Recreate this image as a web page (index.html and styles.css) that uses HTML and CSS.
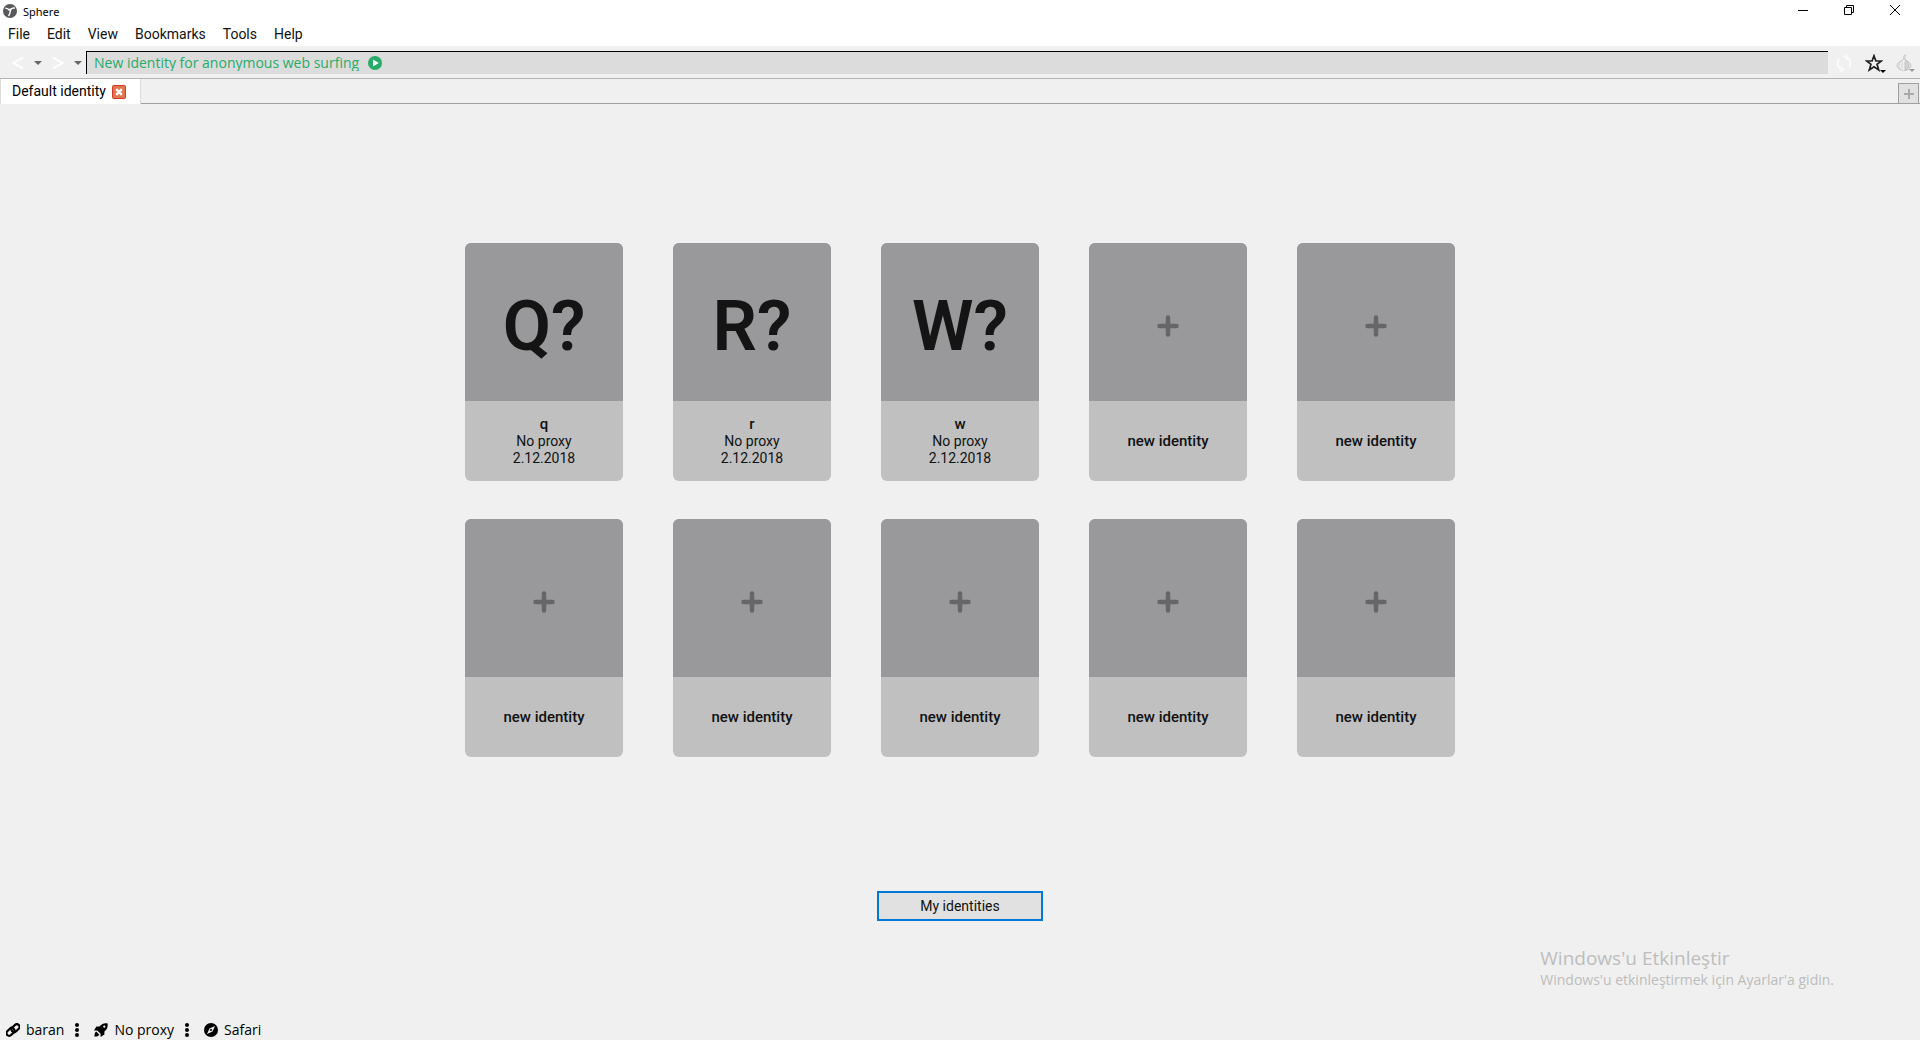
FILE: index.html
```html
<!DOCTYPE html>
<html lang="en">
<head>
    <meta charset="UTF-8">
    <meta name="viewport" content="width=device-width, initial-scale=1.0">
    <title>Sphere</title>
    <link rel="stylesheet" href="styles.css">
</head>
<body>
    <!-- Shared icons -->
    <svg class="sprite" aria-hidden="true">
        <symbol id="caret" viewBox="0 0 8 4"><path d="M0 0h8L4 4z"/></symbol>
        <symbol id="plus" viewBox="0 0 22 22"><path d="M11 2.5v17M2.5 11h17" stroke="currentColor" stroke-width="4.500" stroke-linecap="round"/></symbol>
        <symbol id="dots" viewBox="0 0 6 14"><circle cx="3" cy="2" r="2"/><circle cx="3" cy="7" r="2"/><circle cx="3" cy="12" r="2"/></symbol>
    </svg>

    <header class="title-bar">
        <svg class="app-icon" viewBox="0 0 14 14">
            <circle cx="7" cy="7" r="7" fill="#58585a"/>
            <path d="M2.300 4.200Q5 4.300 6.300 6.300M12 4.200Q9.500 3.500 7.300 5.600M7.300 6.800Q7.300 9.600 5.500 12" fill="none" stroke="#fff" stroke-width="1.300"/>
            <path d="M5.300 4.800L8.800 4.600 7.700 8.300z" fill="#fff"/>
        </svg>
        <span class="app-name">Sphere</span>
        <div class="window-controls">
            <button aria-label="Minimize"><svg viewBox="0 0 10 10"><path d="M0 5.5h10"/></svg></button>
            <button aria-label="Restore"><svg viewBox="0 0 10 10"><path d="M.5 2.5h7v7h-7zM2.5 2.5v-2h7v7h-2"/></svg></button>
            <button aria-label="Close"><svg viewBox="0 0 10 10"><path d="M0 0l10 10M10 0L0 10"/></svg></button>
        </div>
    </header>

    <nav class="menu-bar">
        <button>File</button>
        <button>Edit</button>
        <button>View</button>
        <button>Bookmarks</button>
        <button>Tools</button>
        <button>Help</button>
    </nav>

    <div class="toolbar">
        <div class="history">
            <button aria-label="Back"><svg class="chevron" viewBox="0 0 12 14"><path d="M11 1.500L1.500 7l9.500 5.500"/></svg></button>
            <button aria-label="Back history"><svg class="caret"><use href="#caret"/></svg></button>
            <button aria-label="Forward"><svg class="chevron" viewBox="0 0 12 14"><path d="M1 1.500L10.500 7 1 12.500"/></svg></button>
            <button aria-label="Forward history"><svg class="caret"><use href="#caret"/></svg></button>
        </div>
        <div class="address">
            <input type="text" aria-label="Address" value="New identity for anonymous web surfing">
            <button aria-label="Start">
                <svg class="play" viewBox="0 0 14 14"><circle cx="7" cy="7" r="7" fill="#27ab68"/><path d="M5 3.500L10.800 7 5 10.500z" fill="#fff"/></svg>
            </button>
        </div>
        <div class="tools">
            <button aria-label="Reload">
                <svg class="reload" viewBox="0 0 16 18"><path d="M6.500 15.300A6.500 6.500 0 0 1 3.200 4.800M9.500 2.700A6.500 6.500 0 0 1 12.800 13.200"/><path d="M4.500 12.500l3 2.900L4.300 18M11.500 5.500l-3-2.900L11.700 0" stroke-width="1.500"/></svg>
            </button>
            <button aria-label="Bookmarks">
                <svg class="star" viewBox="0 0 16 16"><path d="M8 1.500l1.700 4.700h4.900l-3.900 3 1.500 5L8 11.300l-4.200 2.900 1.500-5-3.900-3h4.900z"/></svg>
                <svg class="caret corner"><use href="#caret"/></svg>
            </button>
            <button aria-label="Tor" class="tor">
                <svg class="onion" viewBox="0 0 16 17"><path d="M9.500.5L7.500 3l.3 2.500C3.500 7.500 1 8.800 1 11.500 1 14.500 4 16.500 8 16.500s7-2 7-5c0-2.700-2.500-4-6-6L8.800 3.300z" fill="#ddd" stroke="#ccc"/><path d="M8 6c-3 2.500-3.500 4.500-3.500 6S6 15.500 8 16M8.500 6C7 9 7 12.500 8 16" fill="none" stroke="#f5f5f5"/><path d="M9 6c3 2 3.500 4 3.500 6s-1.500 3.500-3 4.200M9 8c1.200 2 1.200 5 0 8" fill="none" stroke="#bbb"/></svg>
                <svg class="caret corner"><use href="#caret"/></svg>
            </button>
        </div>
    </div>

    <div class="tab-bar">
        <div class="tab">
            <span>Default identity</span>
            <button aria-label="Close tab">
                <svg class="tab-close" viewBox="0 0 14 14"><rect x=".5" y=".5" width="13" height="13" rx="1" fill="#e0784f" stroke="#d6382c"/><path d="M4.200 4.200l5.600 5.600M9.800 4.200L4.200 9.800" stroke="#fff" stroke-width="2.400"/></svg>
            </button>
        </div>
        <button class="add-tab" aria-label="New tab"><svg viewBox="0 0 10 10"><path d="M5 0v10M0 5h10" stroke="#aaa" stroke-width="2"/></svg></button>
    </div>

    <main class="content">
        <div class="identities">
            <button class="card">
                <span class="avatar">Q?</span>
                <span class="info"><strong>q</strong><span>No proxy</span><span>2.12.2018</span></span>
            </button>
            <button class="card">
                <span class="avatar">R?</span>
                <span class="info"><strong>r</strong><span>No proxy</span><span>2.12.2018</span></span>
            </button>
            <button class="card">
                <span class="avatar">W?</span>
                <span class="info"><strong>w</strong><span>No proxy</span><span>2.12.2018</span></span>
            </button>
            <button class="card">
                <span class="avatar"><svg class="plus"><use href="#plus"/></svg></span>
                <span class="info"><strong>new identity</strong></span>
            </button>
            <button class="card">
                <span class="avatar"><svg class="plus"><use href="#plus"/></svg></span>
                <span class="info"><strong>new identity</strong></span>
            </button>
            <button class="card">
                <span class="avatar"><svg class="plus"><use href="#plus"/></svg></span>
                <span class="info"><strong>new identity</strong></span>
            </button>
            <button class="card">
                <span class="avatar"><svg class="plus"><use href="#plus"/></svg></span>
                <span class="info"><strong>new identity</strong></span>
            </button>
            <button class="card">
                <span class="avatar"><svg class="plus"><use href="#plus"/></svg></span>
                <span class="info"><strong>new identity</strong></span>
            </button>
            <button class="card">
                <span class="avatar"><svg class="plus"><use href="#plus"/></svg></span>
                <span class="info"><strong>new identity</strong></span>
            </button>
            <button class="card">
                <span class="avatar"><svg class="plus"><use href="#plus"/></svg></span>
                <span class="info"><strong>new identity</strong></span>
            </button>
        </div>
        <button class="my-identities">My identities</button>
    </main>

    <footer class="status-bar">
        <button>
            <svg class="status-icon" viewBox="0 0 14 14"><g fill="none" stroke="#000" stroke-width="2.200" transform="rotate(-45 7 7)"><rect x="-.6" y="3.800" width="9" height="5.400" rx="2.700"/><rect x="5.600" y="4.800" width="9" height="5.400" rx="2.700"/></g></svg>
            <span>baran</span>
        </button>
        <button class="more" aria-label="Identity options"><svg class="dots"><use href="#dots"/></svg></button>
        <button>
            <svg class="status-icon" viewBox="0 0 14 14"><path d="M13.600.4C9.500-.1 7.300 1.200 5.500 3.600H2.400L0 7.400h3.300L6.600 10.700V14l3.800-2.400V8.500C12.800 6.700 14.100 4.500 13.600.4zM2.300 8.600C.9 9.300.5 11 .4 13.600c2.600-.1 4.300-.5 5-1.900z"/><circle cx="10.300" cy="3.700" r="1.100" fill="#f0f0f0"/></svg>
            <span>No proxy</span>
        </button>
        <button class="more" aria-label="Proxy options"><svg class="dots"><use href="#dots"/></svg></button>
        <button>
            <svg class="status-icon" viewBox="0 0 14 14"><circle cx="7" cy="7" r="7"/><path d="M11 3L8.500 8.500 3 11l2.500-5.500z" fill="#f0f0f0"/><circle cx="7" cy="7" r="1.100"/></svg>
            <span>Safari</span>
        </button>
    </footer>

    <aside class="watermark" lang="tr">
        <p class="watermark-title">Windows'u Etkinleştir</p>
        <p>Windows'u etkinleştirmek için Ayarlar'a gidin.</p>
    </aside>
</body>
</html>
```
FILE: styles.css
```css
* {
    margin: 0;
    padding: 0;
    box-sizing: border-box;
}

body {
    display: flex;
    flex-direction: column;
    min-height: 100vh;
    font-family: Roboto, "Noto Sans", sans-serif;
    font-size: 14px;
    line-height: 17px;
    color: #111;
    background: #f0f0f0;
}

button,
input {
    font: inherit;
    color: inherit;
    background: none;
    border: none;
}

svg {
    display: block;
}

.sprite {
    position: absolute;
    width: 0;
    height: 0;
}

/* Title bar */
.title-bar {
    display: flex;
    align-items: center;
    height: 22px;
    padding: 0 2px 0 3px;
    background: #fff;
}

.app-icon {
    width: 14px;
    height: 14px;
}

.app-name {
    margin-left: 6px;
    font-family: "Noto Sans", sans-serif;
    font-size: 11px;
    color: #000;
}

.window-controls {
    display: flex;
    margin-left: auto;
}

.window-controls button {
    display: flex;
    justify-content: center;
    width: 46px;
    padding: 4px 0 6px;
}

.window-controls svg {
    width: 10px;
    height: 10px;
    fill: none;
    stroke: #000;
}

/* Menu */
.menu-bar {
    display: flex;
    align-items: center;
    gap: 17px;
    height: 25px;
    padding: 1px 8px 0;
    background: #fff;
    border-bottom: 1px solid #f2f2f2;
}

/* Toolbar */
.toolbar {
    display: flex;
    align-items: center;
    height: 32px;
    border-bottom: 1px solid #b4b4b4;
}

.history {
    display: flex;
    align-items: center;
    gap: 10px;
    padding: 0 4px 0 12px;
}

.chevron {
    width: 12px;
    height: 14px;
    fill: none;
    stroke: #fff;
    stroke-width: 2;
}

.caret {
    width: 8px;
    height: 4px;
    fill: #666;
}

.address {
    flex: 1;
    display: flex;
    align-items: center;
    height: 23px;
    padding-left: 7px;
    background: #dcdcdc;
    border-top: 1px solid #000;
    border-left: 1px solid #000;
}

.address input {
    width: 274px;
    padding-bottom: 2px;
    font-family: "Open Sans", sans-serif;
    color: #27ab68;
    outline: none;
}

.play {
    width: 14px;
    height: 14px;
}

.tools {
    display: flex;
    align-items: center;
    gap: 13px;
    padding: 0 8px;
}

.tools button {
    position: relative;
}

.reload {
    width: 16px;
    height: 18px;
    fill: none;
    stroke: #fafafa;
    stroke-width: 2;
}

.star {
    width: 18px;
    height: 18px;
    fill: none;
    stroke: #222;
    stroke-width: 1.5;
}

.onion {
    width: 16px;
    height: 17px;
}

.corner {
    position: absolute;
    right: -3px;
    bottom: -1px;
    width: 6px;
    height: 3px;
    fill: #000;
}

.tor .corner {
    fill: #999;
}

/* Tabs */
.tab-bar {
    display: flex;
    justify-content: space-between;
    align-items: flex-end;
    height: 25px;
    background: linear-gradient(#a0a0a0, #a0a0a0) bottom / 100% 1px no-repeat;
}

.tab {
    display: flex;
    align-items: center;
    gap: 6px;
    height: 25px;
    padding: 0 14px 0 11px;
    color: #000;
    background: #fff;
    border: 1px solid #dcdcdc;
    border-width: 0 1px;
}

.tab-close {
    width: 14px;
    height: 14px;
}

.add-tab {
    display: grid;
    place-items: center;
    width: 21px;
    height: 21px;
    margin-right: 1px;
    background: #e1e1e1;
    border: 1px solid #a0a0a0;
}

.add-tab svg {
    width: 10px;
    height: 10px;
}

/* Identities */
.content {
    flex: 1;
    display: flex;
    flex-direction: column;
    align-items: center;
    gap: 134px;
    padding: 139px 20px 0;
}

.identities {
    display: grid;
    grid-template-columns: repeat(5, 158px);
    gap: 38px 50px;
}

.card {
    border-radius: 6px;
    overflow: hidden;
    background: #c0c0c0;
}

.avatar {
    display: flex;
    align-items: center;
    justify-content: center;
    height: 158px;
    padding-top: 8px;
    font-size: 70px;
    line-height: 80px;
    font-weight: 600;
    color: #141414;
    background: #99999b;
}

.plus {
    width: 22px;
    height: 22px;
    color: #666;
}

.info {
    display: flex;
    flex-direction: column;
    justify-content: center;
    height: 80px;
}

.info strong {
    font-size: 15px;
    font-weight: 500;
}

.my-identities {
    width: 166px;
    height: 30px;
    background: #e1e1e1;
    border: 2px solid #0078d7;
}

/* Status bar */
.status-bar {
    display: flex;
    align-items: center;
    height: 20px;
    padding: 0 6px;
    font-family: "Open Sans", sans-serif;
    color: #000;
}

.status-bar button {
    display: flex;
    align-items: center;
    gap: 6px;
}

.status-bar span {
    padding-bottom: 2px;
}

.status-icon {
    width: 14px;
    height: 14px;
}

.status-bar .more {
    padding: 0 14px 0 10px;
}

.dots {
    width: 6px;
    height: 14px;
}

/* Activation notice lying over the desktop */
.watermark {
    position: absolute;
    right: 86px;
    bottom: 50px;
    font-family: "Open Sans", sans-serif;
    line-height: 20px;
    color: #bdbdbd;
    pointer-events: none;
}

.watermark-title {
    font-size: 19px;
    line-height: 24px;
}
```
